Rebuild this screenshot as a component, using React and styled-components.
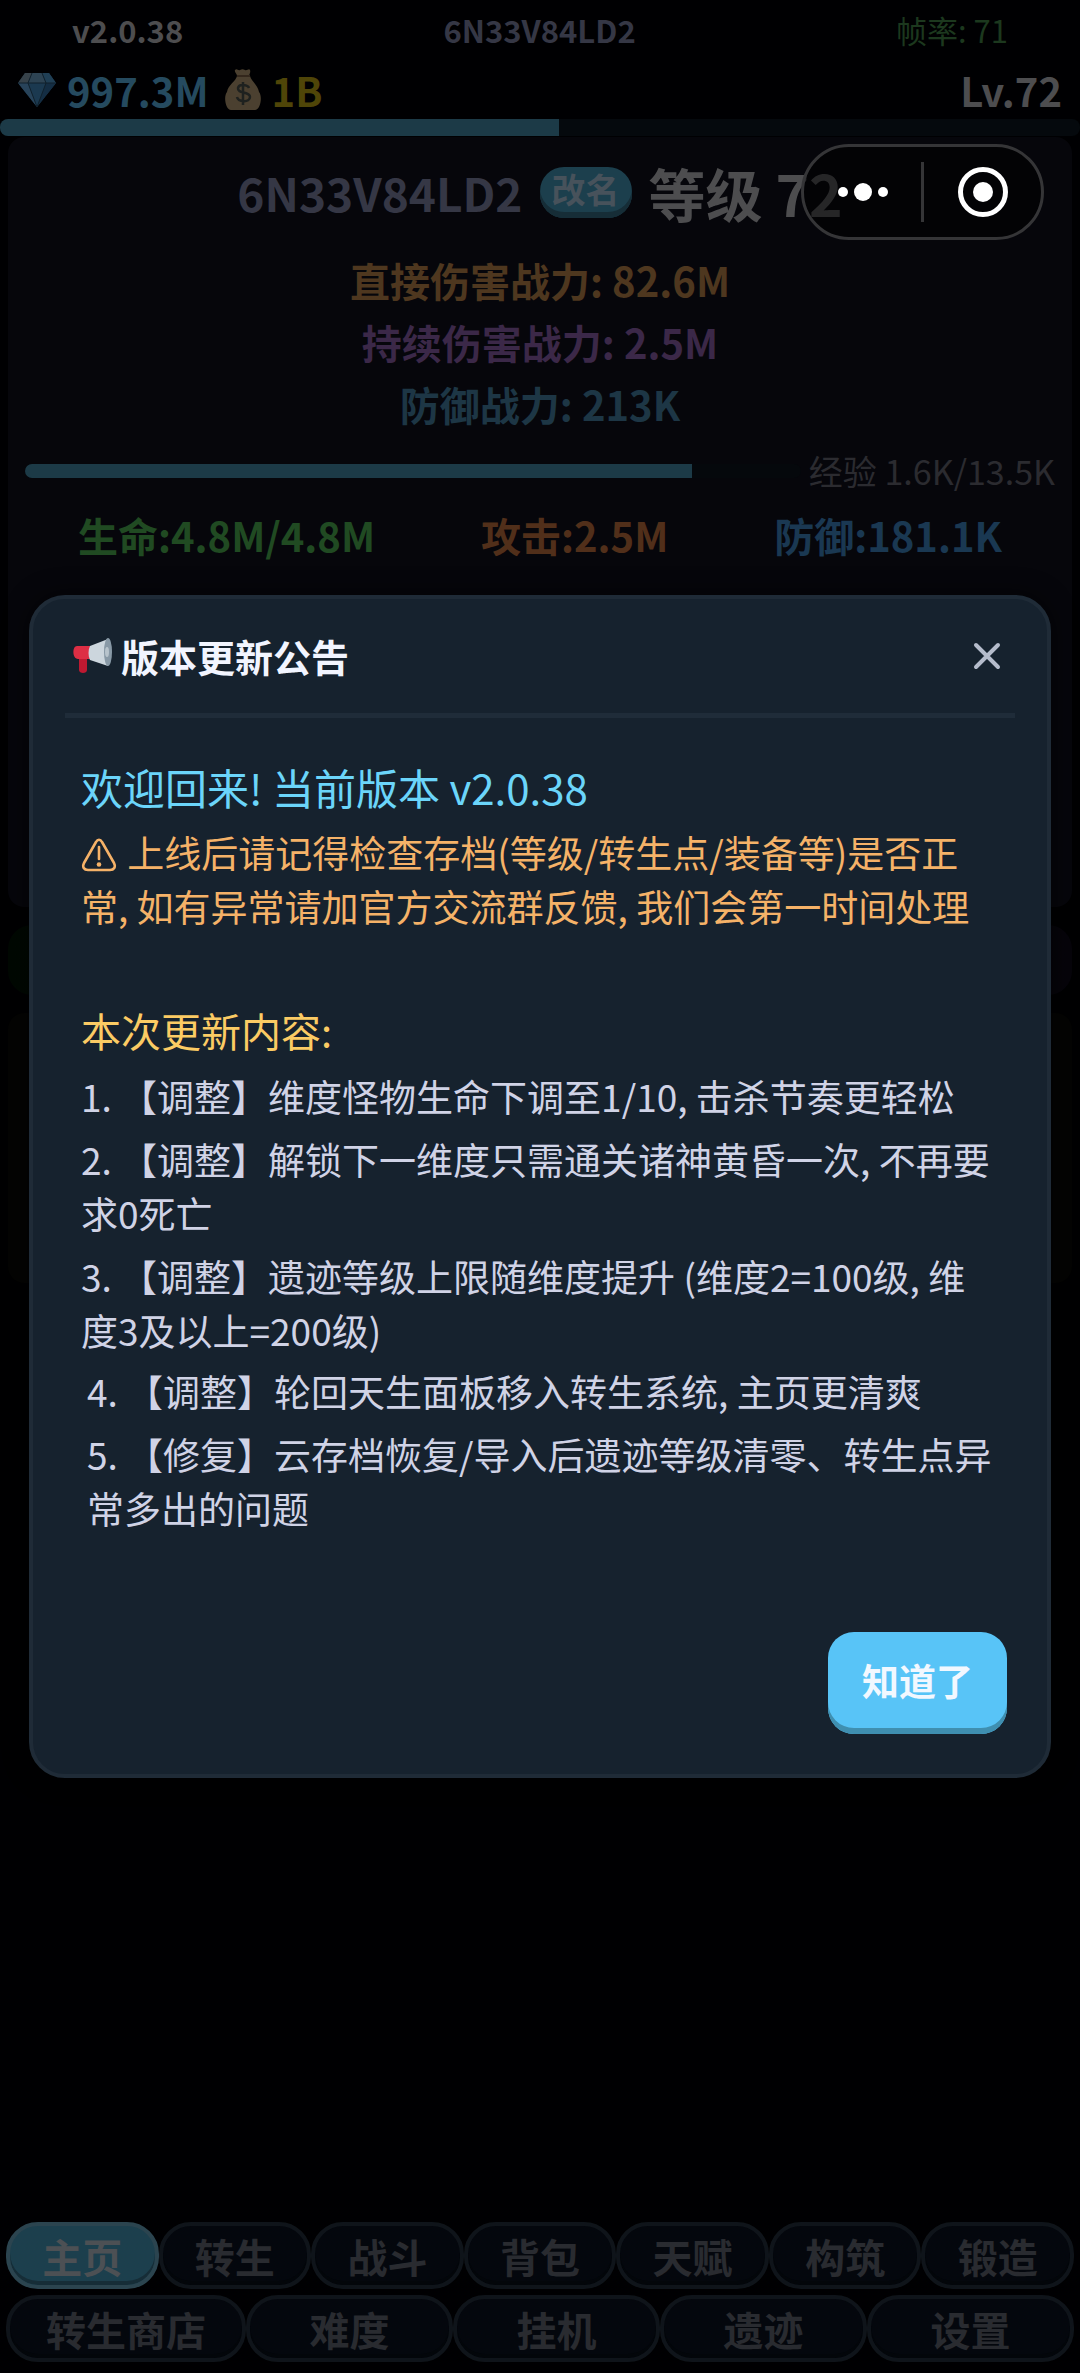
import React, { useState } from "react";
import styled, { createGlobalStyle } from "styled-components";

const GlobalStyle = createGlobalStyle`
  *, *::before, *::after { box-sizing: border-box; }
  html, body { margin: 0; background: #000002; }
  body, button {
    font-family: "Noto Sans CJK SC", "Noto Sans", sans-serif;
  }
  h1, h2, h3, p, ol { margin: 0; padding: 0; }
`;

const Screen = styled.div`
  display: flex;
  flex-direction: column;
  min-height: 100vh;
  background: #000002;
  color: #4d4d4f;
`;

const StatusRow = styled.header`
  display: flex;
  justify-content: space-between;
  align-items: center;
  height: 60px;
  padding: 0 72px;
  font-size: 31px;
  line-height: 40px;
  font-weight: 700;
`;

const PlayerId = styled.span`
  color: #353745;
`;

const FrameRate = styled.span`
  font-weight: 400;
  color: #1c381e;
`;

const WalletRow = styled.div`
  display: flex;
  align-items: center;
  gap: 12px;
  height: 59px;
  padding: 0 18px;
  font-size: 40px;
  line-height: 48px;
  font-weight: 700;
`;

const Currency = styled.div`
  display: flex;
  align-items: center;
  gap: 11px;
  margin-right: 4px;
  color: ${(p) => p.$color};
`;

const Level = styled.span`
  margin-left: auto;
`;

const Track = styled.div`
  flex: 1 1 auto;
  height: ${(p) => p.$height}px;
  border-radius: 8px;
  overflow: hidden;
  background: ${(p) => p.$color};
`;

const Fill = styled.div`
  height: 100%;
  background: #1c3a47;
`;

const HeroPanel = styled.section`
  display: flex;
  flex-direction: column;
  height: 770px;
  margin: 1px 8px 0;
  padding: 25px 17px 0;
  border-radius: 16px;
  background: #06060b;
`;

const NameRow = styled.div`
  display: flex;
  justify-content: center;
  align-items: center;
  gap: 17px;
  height: 60px;
`;

const HeroName = styled.h1`
  font-size: 46px;
  line-height: 60px;
  font-weight: 700;
  color: #353745;
`;

const RenameButton = styled.button`
  height: 51px;
  padding: 0 12px 6px;
  border: 0;
  border-radius: 24px;
  background: #1c3f4d;
  box-shadow: inset 0 -6px #162d37;
  color: #47525b;
  font-size: 34px;
  line-height: 44px;
  font-weight: 700;
`;

const HeroLevel = styled.span`
  font-size: 57px;
  line-height: 60px;
  font-weight: 700;
`;

const PowerList = styled.div`
  display: flex;
  flex-direction: column;
  align-items: center;
  margin-top: 27px;
  font-size: 40px;
  line-height: 62px;
  font-weight: 700;
`;

const Colored = styled.span`
  color: ${(p) => p.$color};
`;

const ExpRow = styled.div`
  display: flex;
  align-items: center;
  gap: 8px;
  height: 44px;
  margin-top: 14px;
`;

const ExpText = styled.span`
  font-size: 34px;
  line-height: 44px;
  color: #2b2b30;
`;

const StatRow = styled.div`
  display: flex;
  justify-content: space-around;
  margin-top: 12px;
  font-size: 40px;
  line-height: 60px;
  font-weight: 700;
`;

const ActionStrip = styled.div`
  height: 70px;
  margin: 18px 8px 0;
  border-radius: 24px;
  background: linear-gradient(90deg, #010802, #06040a);
`;

const LogPanel = styled.section`
  height: 270px;
  margin: 18px 8px 0;
  border-radius: 16px;
  background: #040403;
`;

const Nav = styled.nav`
  display: flex;
  flex-direction: column;
  gap: 6px;
  margin-top: auto;
  padding: 0 6px 11px;
`;

const NavRow = styled.div`
  display: flex;
`;

const NavButton = styled.button`
  flex: 1 1 0;
  height: 67px;
  padding: 0 ${(p) => (p.$roomy ? 36 : 16)}px;
  border: 4px solid ${(p) => (p.$active ? "#2b444f" : "#0f141a")};
  border-radius: 32px;
  background: ${(p) => (p.$active ? "#1c3f4d" : "#04070d")};
  box-shadow: inset 0 -4px ${(p) => (p.$active ? "#162d37" : "#03060a")};
  color: ${(p) => (p.$active ? "#4c5054" : "#292b30")};
  font-size: 40px;
  line-height: 56px;
  font-weight: 700;
  white-space: nowrap;
`;

const Capsule = styled.div`
  position: absolute;
  top: 144px;
  right: 36px;
  display: flex;
  align-items: center;
  width: 243px;
  height: 96px;
  border: 3px solid #353537;
  border-radius: 48px;
  background: rgba(0, 0, 0, 0.5);
`;

const CapsuleButton = styled.button`
  display: flex;
  flex: 1 1 0;
  justify-content: center;
  align-items: center;
  height: 60px;
  padding: 0;
  border: 0;
  background: none;

  & + & { border-left: 3px solid #353537; }
`;

const Overlay = styled.div`
  position: absolute;
  inset: 0;
  display: flex;
  align-items: center;
  justify-content: center;
  padding: 0 29px;
`;

const Dialog = styled.section`
  width: 100%;
  padding: 0 32px 40px;
  border: 4px solid #1f2b37;
  border-radius: 36px;
  background: #16222e;
  box-shadow: 0 0 24px rgba(0, 0, 0, 0.6);
`;

const DialogHeader = styled.header`
  display: flex;
  align-items: center;
  gap: 8px;
  height: 119px;
  padding: 0 14px 0 8px;
  border-bottom: 5px solid #1f2c39;
`;

const DialogTitle = styled.h2`
  font-size: 38px;
  line-height: 56px;
  font-weight: 700;
  color: #f2f5ff;
`;

const CloseButton = styled.button`
  display: flex;
  margin-left: auto;
  padding: 0;
  border: 0;
  background: none;
`;

const DialogBody = styled.div`
  padding: 39px 18px 0 16px;
`;

const Heading = styled.h3`
  margin-top: ${(p) => p.$gap}px;
  font-size: ${(p) => p.$size}px;
  line-height: 60px;
  font-weight: 400;
  color: ${(p) => p.$color};
`;

const Warning = styled.p`
  margin-top: 8px;
  font-size: 37px;
  line-height: 54px;
  color: #f5b268;

  svg {
    margin-right: 2px;
    vertical-align: -4px;
  }
`;

const ChangeList = styled.ol`
  display: flex;
  flex-direction: column;
  gap: 9px;
  margin-top: ${(p) => p.$gap}px;
  padding-left: ${(p) => (p.$indented ? 6 : 0)}px;
  list-style: none;
  font-size: 37px;
  line-height: 54px;
  color: #d0d3e6;
`;

const DialogFooter = styled.footer`
  display: flex;
  justify-content: flex-end;
  margin-top: 97px;
  padding-right: 8px;
`;

const ConfirmButton = styled.button`
  height: 102px;
  padding: 0 34px 6px;
  border: 0;
  border-radius: 26px;
  background: #58c4f7;
  box-shadow: inset 0 -6px #3f8fb0;
  color: #f2f8ff;
  font-size: 37px;
  line-height: 56px;
  font-weight: 700;
`;

const GemIcon = () => (
  <svg width="38" height="34" viewBox="0 0 38 34" aria-hidden="true">
    <path d="M7 0h24l7 10-19 24L0 10z" fill="#1b3950" />
    <path d="M7 0h7l-4 10H0z" fill="#37424a" />
    <path d="M14 0h10l4 10H10z" fill="#2d4353" />
    <path d="M24 0h7l7 10H28z" fill="#203f55" />
    <path d="M0 10h10l9 24z" fill="#28435a" />
    <path d="M28 10h10L19 34z" fill="#142d43" />
    <path d="M0 10h38M14 0l-4 10 9 24 9-24-4-10" fill="none" stroke="#10202c" strokeWidth="1" />
  </svg>
);

const MoneyBagIcon = () => (
  <svg width="36" height="41" viewBox="0 0 36 41" aria-hidden="true">
    <path d="M12 7h13c1 5 8 9 9 16 4 5 1 18-4 18H6C1 41-2 28 2 23c1-7 9-11 10-16z" fill="#4b4030" />
    <path d="M10 1c2-2 3 1 5 0s3-1 5 0 4-2 5 0-1 5-1 6H12c0-2-3-4-2-6z" fill="#4b4030" />
    <path d="M12 7h13" stroke="#33271c" strokeWidth="2" />
    <path d="M24 19c-1-3-10-5-11 0-1 6 12 3 12 9 0 6-12 5-13 0M18 13v23" fill="none" stroke="#1e211f" strokeWidth="2.500" />
  </svg>
);

const MegaphoneIcon = () => (
  <svg width="40" height="36" viewBox="0 0 40 36" aria-hidden="true">
    <path d="M6 17h8v15c0 4-8 4-8 0z" fill="#be1931" />
    <path d="M4 8h14v13H5c-6 0-6-13-1-13z" fill="#dd2e44" />
    <path d="M17 8L35 1v27l-18-6c-2-4-2-10 0-14z" fill="#ccd6dd" />
    <ellipse cx="35" cy="14" rx="4" ry="14" fill="#8899a6" />
    <ellipse cx="34" cy="14" rx="2" ry="5" fill="#b8c4cc" />
  </svg>
);

const WarningIcon = () => (
  <svg width="36" height="34" viewBox="0 0 36 34" fill="none" stroke="#f5b268" strokeWidth="2.6" strokeLinejoin="round" role="img" aria-label="警告">
    <path d="M15 4c1.600-3 4.400-3 6 0l12 21c2 4 0 7-4 7H7c-4 0-6-3-4-7z" />
    <path d="M18 9v12" strokeLinecap="round" />
    <circle cx="18" cy="26.500" r="2.300" fill="#f5b268" stroke="none" />
  </svg>
);

const CloseIcon = () => (
  <svg width="28" height="28" viewBox="0 0 28 28" aria-hidden="true">
    <path d="M3 3l22 22M25 3L3 25" stroke="#b5bccb" strokeWidth="4" strokeLinecap="round" />
  </svg>
);

const MoreIcon = () => (
  <svg width="52" height="20" viewBox="0 0 52 20" fill="#fff" aria-hidden="true">
    <circle cx="6" cy="10" r="5" />
    <circle cx="26" cy="10" r="9" />
    <circle cx="46" cy="10" r="5" />
  </svg>
);

const TargetIcon = () => (
  <svg width="50" height="50" viewBox="0 0 50 50" aria-hidden="true">
    <circle cx="25" cy="25" r="22.500" fill="none" stroke="#fff" strokeWidth="5" />
    <circle cx="25" cy="25" r="10" fill="#fff" />
  </svg>
);

const powers = [
  { text: "直接伤害战力: 82.6M", color: "#4e371f" },
  { text: "持续伤害战力: 2.5M", color: "#3b2848" },
  { text: "防御战力: 213K", color: "#1d3645" },
];

const stats = [
  { text: "生命:4.8M/4.8M", color: "#204a22" },
  { text: "攻击:2.5M", color: "#512f1a" },
  { text: "防御:181.1K", color: "#1a3852" },
];

const changes = [
  "1. 【调整】维度怪物生命下调至1/10, 击杀节奏更轻松",
  "2. 【调整】解锁下一维度只需通关诸神黄昏一次, 不再要求0死亡",
  "3. 【调整】遗迹等级上限随维度提升 (维度2=100级, 维度3及以上=200级)",
];

const moreChanges = [
  "4. 【调整】轮回天生面板移入转生系统, 主页更清爽",
  "5. 【修复】云存档恢复/导入后遗迹等级清零、转生点异常多出的问题",
];

const mainTabs = ["主页", "转生", "战斗", "背包", "天赋", "构筑", "锻造"];
const moreTabs = ["转生商店", "难度", "挂机", "遗迹", "设置"];

export default function App() {
  const [open, setOpen] = useState(true);
  const [tab, setTab] = useState("主页");
  const close = () => setOpen(false);

  return (
    <>
      <GlobalStyle />
      <Screen>
        <StatusRow>
          <span>v2.0.38</span>
          <PlayerId>6N33V84LD2</PlayerId>
          <FrameRate>帧率: 71</FrameRate>
        </StatusRow>
        <WalletRow>
          <Currency $color="#254a5f"><GemIcon />997.3M</Currency>
          <Currency $color="#4f4508"><MoneyBagIcon />1B</Currency>
          <Level>Lv.72</Level>
        </WalletRow>
        <div>
          <Track $height={17} $color="#05090d">
            <Fill style={{ width: "51.8%" }} />
          </Track>
        </div>
        <HeroPanel>
          <NameRow>
            <HeroName>6N33V84LD2</HeroName>
            <RenameButton type="button">改名</RenameButton>
            <HeroLevel>等级 72</HeroLevel>
          </NameRow>
          <PowerList>
            {powers.map((p) => (
              <Colored key={p.text} $color={p.color}>{p.text}</Colored>
            ))}
          </PowerList>
          <ExpRow>
            <Track $height={14} $color="#05080c">
              <Fill style={{ width: "86%" }} />
            </Track>
            <ExpText>经验 1.6K/13.5K</ExpText>
          </ExpRow>
          <StatRow>
            {stats.map((s) => (
              <Colored key={s.text} $color={s.color}>{s.text}</Colored>
            ))}
          </StatRow>
        </HeroPanel>
        <ActionStrip />
        <LogPanel />
        <Nav>
          <NavRow>
            {mainTabs.map((t) => (
              <NavButton key={t} type="button" $active={t === tab} onClick={() => setTab(t)}>{t}</NavButton>
            ))}
          </NavRow>
          <NavRow>
            {moreTabs.map((t) => (
              <NavButton key={t} type="button" $roomy $active={t === tab} onClick={() => setTab(t)}>{t}</NavButton>
            ))}
          </NavRow>
        </Nav>
      </Screen>
      {open && (
        <Overlay>
          <Dialog role="dialog" aria-labelledby="notice-title">
            <DialogHeader>
              <MegaphoneIcon />
              <DialogTitle id="notice-title">版本更新公告</DialogTitle>
              <CloseButton type="button" aria-label="关闭" onClick={close}>
                <CloseIcon />
              </CloseButton>
            </DialogHeader>
            <DialogBody>
              <Heading $size={42} $gap={0} $color="#6bd5fa">欢迎回来! 当前版本 v2.0.38</Heading>
              <Warning>
                <WarningIcon /> 上线后请记得检查存档(等级/转生点/装备等)是否正常, 如有异常请加官方交流群反馈, 我们会第一时间处理
              </Warning>
              <Heading $size={40} $gap={67} $color="#fbcb64">本次更新内容:</Heading>
              <ChangeList $gap={9}>
                {changes.map((c) => <li key={c}>{c}</li>)}
              </ChangeList>
              <ChangeList $gap={7} $indented>
                {moreChanges.map((c) => <li key={c}>{c}</li>)}
              </ChangeList>
            </DialogBody>
            <DialogFooter>
              <ConfirmButton type="button" onClick={close}>知道了</ConfirmButton>
            </DialogFooter>
          </Dialog>
        </Overlay>
      )}
      <Capsule>
        <CapsuleButton type="button" aria-label="更多"><MoreIcon /></CapsuleButton>
        <CapsuleButton type="button" aria-label="退出"><TargetIcon /></CapsuleButton>
      </Capsule>
    </>
  );
}
